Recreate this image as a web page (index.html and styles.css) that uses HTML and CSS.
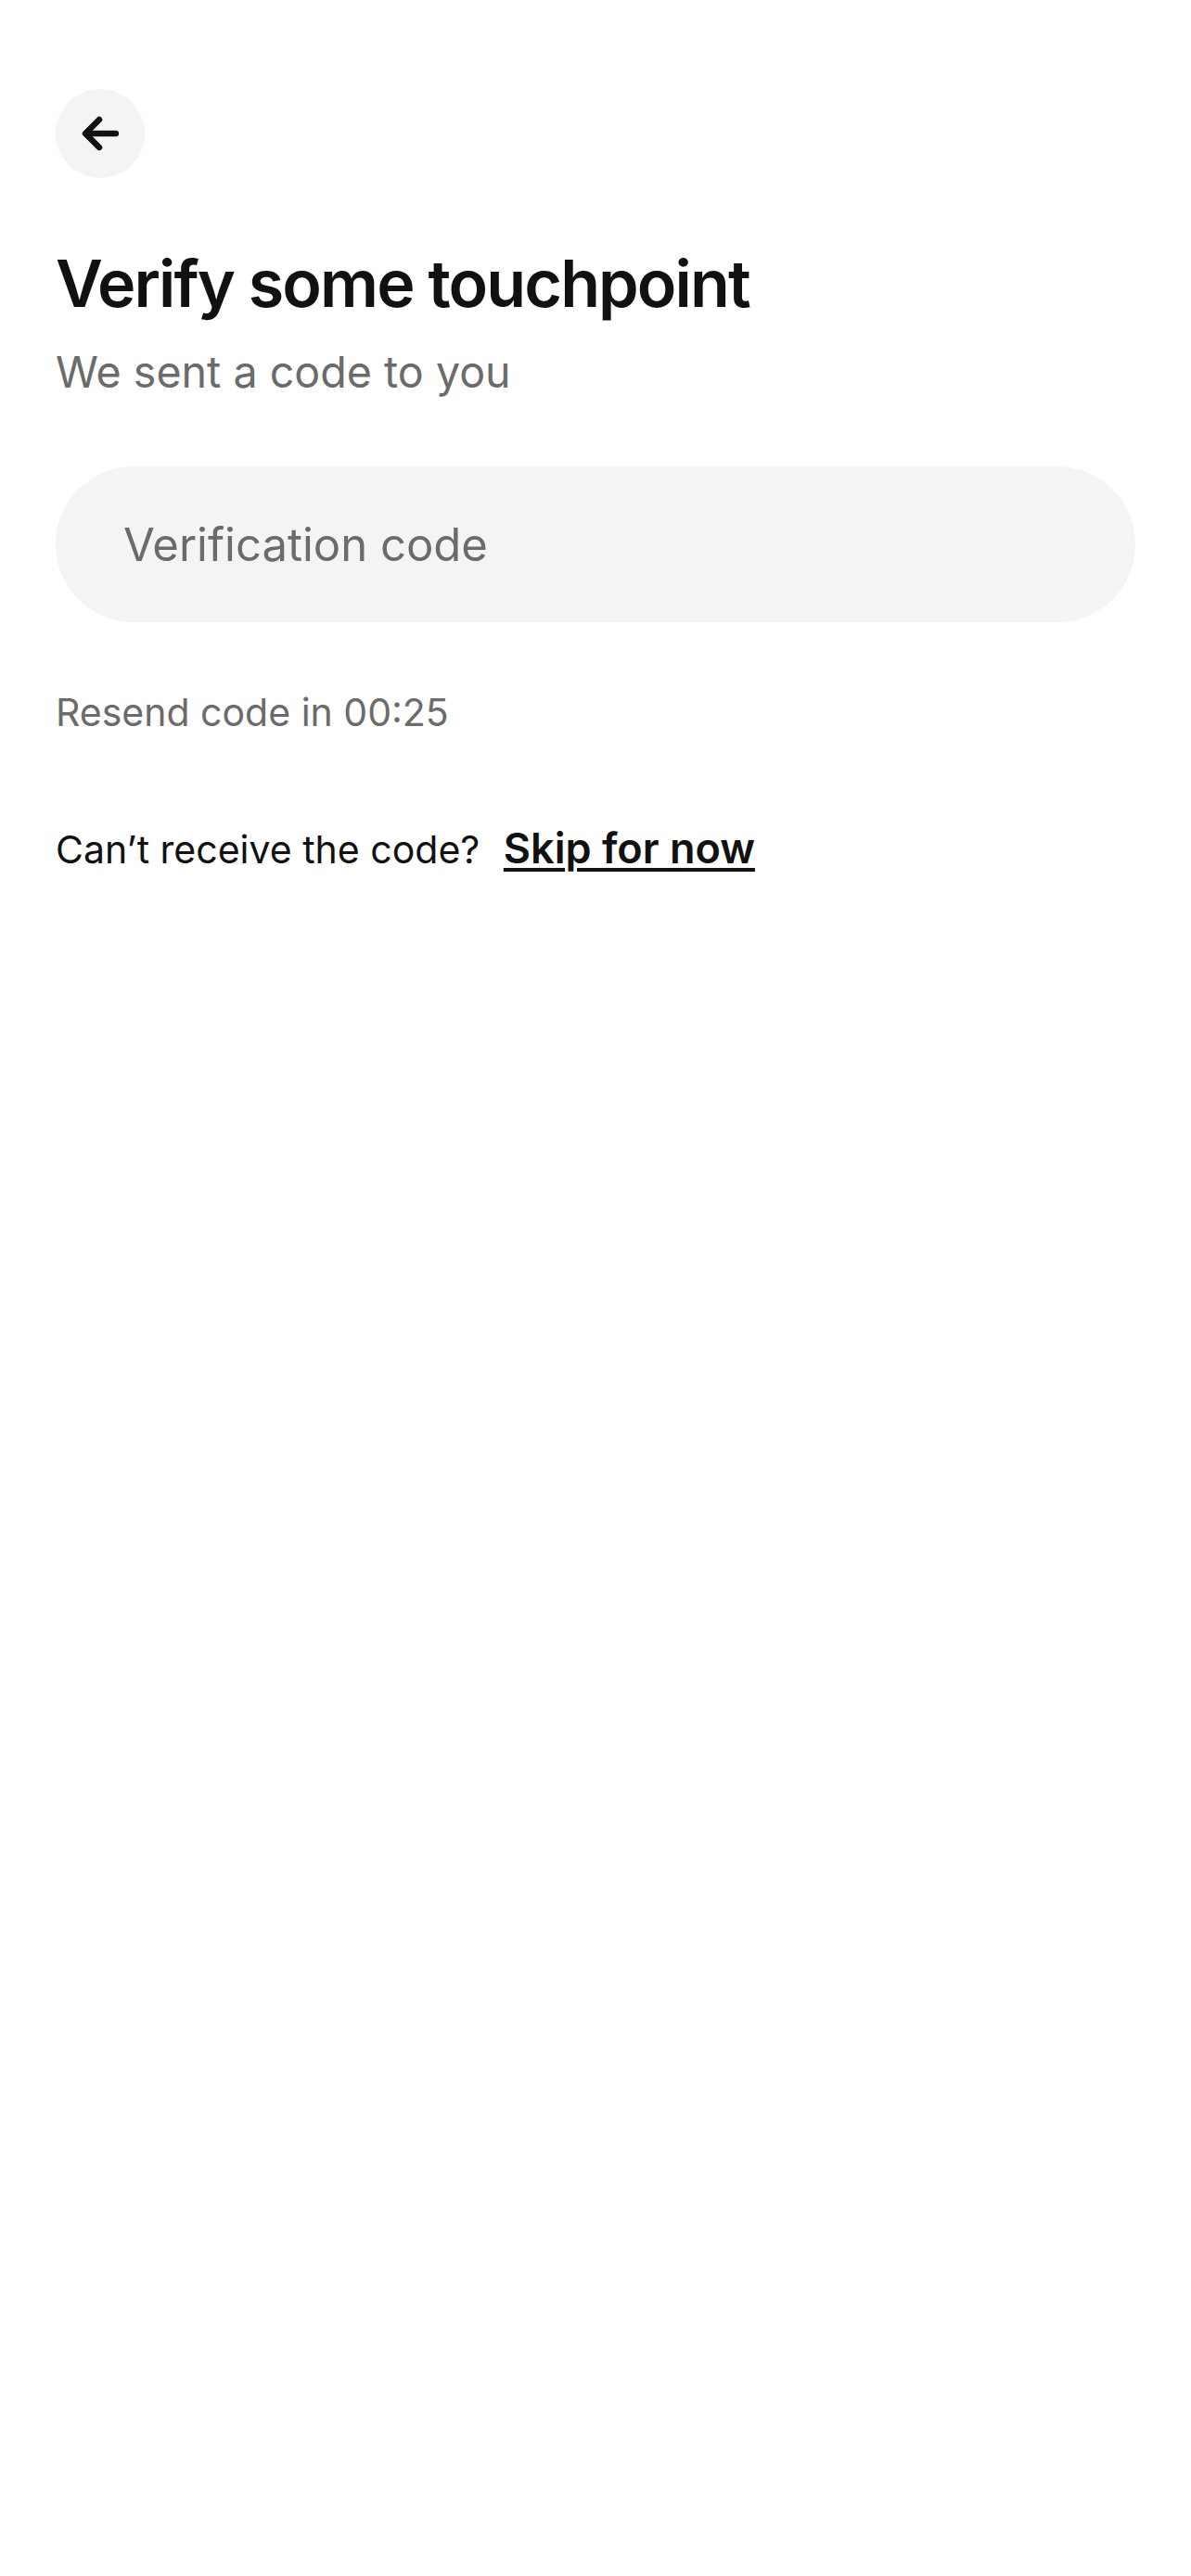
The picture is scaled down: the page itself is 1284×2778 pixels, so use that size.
FILE: index.html
```html
<!DOCTYPE html>
<html lang="en">
<head>
<meta charset="utf-8">
<title>Verify</title>
<link rel="stylesheet" href="styles.css">
</head>
<body>
<main class="page">
  <button class="back" aria-label="Back">
    <svg viewBox="0 0 40 40" width="40" height="40" fill="none" stroke="#111" stroke-width="6.5" stroke-linecap="round" stroke-linejoin="round">
      <path d="M37 20 H5"/>
      <path d="M19 5 L4 20 L19 35"/>
    </svg>
  </button>
  <h1 class="title">Verify some touchpoint</h1>
  <p class="subtitle">We sent a code to you</p>
  <div class="field">
    <input class="input" type="text" placeholder="Verification code">
  </div>
  <p class="resend">Resend code in 00:25</p>
  <p class="help">Can’t receive the code? <a class="skip" href="#">Skip for now</a></p>
</main>
</body>
</html>
```
FILE: styles.css
```css
html, body {
  margin: 0;
  padding: 0;
  background: #ffffff;
}
body {
  font-family: Inter, "Noto Sans", "Liberation Sans", sans-serif;
  color: #111111;
}
.page {
  display: flex;
  flex-direction: column;
  align-items: flex-start;
  padding: 96px 60px 0 60px;
}
.back {
  width: 96px;
  height: 96px;
  border-radius: 50%;
  border: none;
  background: #f4f4f4;
  display: flex;
  align-items: center;
  justify-content: center;
  padding: 0;
  cursor: pointer;
}
.title {
  margin: 72px 0 0 0;
  font-size: 70px;
  line-height: 84px;
  font-weight: 600;
  letter-spacing: -1.9px;
  color: #111111;
}
.subtitle {
  margin: 25px 0 0 0;
  font-size: 46.6px;
  line-height: 56px;
  color: #6b6b6b;
}
.field {
  margin-top: 74px;
  align-self: stretch;
  height: 168px;
  border-radius: 84px;
  background: #f4f4f4;
  display: flex;
  align-items: center;
  padding: 0 72px 0 73px;
}
.input {
  flex: 1;
  border: none;
  background: transparent;
  font-family: inherit;
  font-size: 49px;
  color: #111111;
  outline: none;
  padding: 0;
}
.input::placeholder {
  color: #6b6b6b;
}
.resend {
  margin: 72px 0 0 0;
  font-size: 41px;
  line-height: 50px;
  color: #6b6b6b;
}
.help {
  margin: 97px 0 0 0;
  font-size: 41px;
  line-height: 50px;
  color: #111111;
}
.skip {
  margin-left: 14px;
  font-size: 45px;
  color: #111111;
  font-weight: 600;
  text-decoration: underline;
  text-decoration-thickness: 4px;
  text-underline-offset: 5px;
}
```
